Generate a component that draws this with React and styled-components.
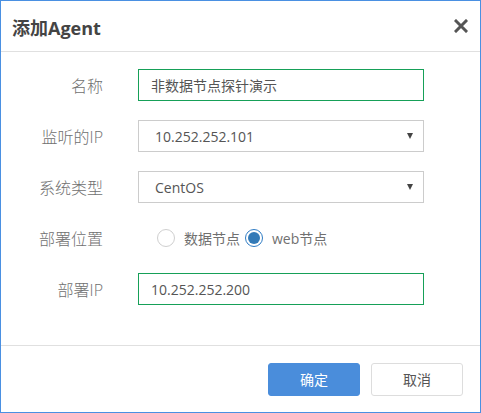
import React, { useState } from "react";
import styled, { createGlobalStyle } from "styled-components";

const Global = createGlobalStyle`
  html, body { margin: 0; padding: 0; background: #fff; }
  body { font-family: "Open Sans", "Noto Sans CJK SC", sans-serif; }
`;

const Dialog = styled.div`
  box-sizing: border-box;
  width: 481px;
  height: 413px;
  border: 1px solid #4a90e2;
  background: #fff;
  display: flex;
  flex-direction: column;
`;

const Header = styled.div`
  height: 50px;
  border-bottom: 1px solid #e0e0e0;
  display: flex;
  align-items: center;
  justify-content: space-between;
  padding: 0 9px 0 11px;
`;

const Title = styled.h3`
  margin: 0;
  padding-top: 2px;
  font-size: 18px;
  font-weight: 700;
  color: #444;
  font-family: "Open Sans", "Noto Sans CJK SC", sans-serif;
`;

const Close = styled.button`
  border: 0;
  background: none;
  padding: 0;
  width: 20px;
  height: 20px;
  display: flex;
  align-items: center;
  justify-content: center;
  cursor: pointer;
`;

const Body = styled.div`
  flex: 1;
  padding: 17px 0 0;
  display: flex;
  flex-direction: column;
  gap: 19px;
  border-bottom: 1px solid #e0e0e0;
`;

const Row = styled.div`
  display: flex;
  align-items: center;
  height: 32px;
`;

const Label = styled.label`
  width: 102px;
  text-align: right;
  font-size: 16px;
  font-weight: 300;
  color: #707070;
  margin-right: 35px;
  font-family: "Open Sans", "Noto Sans CJK SC", sans-serif;
`;

const Field = styled.div`
  box-sizing: border-box;
  width: 286px;
  height: 32px;
  border: 1px solid ${(p) => (p.$active ? "#16a058" : "#cccccc")};
  display: flex;
  align-items: center;
  justify-content: space-between;
  padding: 0 10px 0 ${(p) => (p.$select ? "16px" : "12px")};
  font-size: 14px;
  color: #555;
`;

const Caret = styled.span`
  width: 0;
  height: 0;
  border-left: 3.5px solid transparent;
  border-right: 3.5px solid transparent;
  border-top: 6px solid #444;
`;

const Radios = styled.div`
  display: flex;
  align-items: center;
  padding-left: 19px;
`;

const RadioOpt = styled.span`
  display: flex;
  align-items: center;
  gap: 9px;
  margin-right: 5px;
  font-size: 14px;
  color: #707070;
  cursor: pointer;
`;

const Dot = styled.span`
  box-sizing: border-box;
  width: 18px;
  height: 18px;
  border-radius: 50%;
  border: 1px solid ${(p) => (p.$on ? "#2f7cc4" : "#cfcfcf")};
  display: flex;
  align-items: center;
  justify-content: center;
  &::after {
    content: "";
    width: 12px;
    height: 12px;
    border-radius: 50%;
    background: ${(p) => (p.$on ? "#337ab7" : "transparent")};
  }
`;

const Footer = styled.div`
  height: 66px;
  display: flex;
  align-items: center;
  justify-content: flex-end;
  gap: 11px;
  padding: 0 17px 0 0;
`;

const Button = styled.button`
  box-sizing: border-box;
  width: 92px;
  height: 33px;
  border-radius: 3px;
  font-size: 14px;
  font-family: "Open Sans", "Noto Sans CJK SC", sans-serif;
  border: 1px solid ${(p) => (p.$primary ? "#4a8ddb" : "#dddddd")};
  background: ${(p) => (p.$primary ? "#4a8ddb" : "#fff")};
  color: ${(p) => (p.$primary ? "#fff" : "#555")};
  cursor: pointer;
`;

export default function App() {
  const [place, setPlace] = useState("web");
  return (
    <>
      <Global />
      <Dialog>
        <Header>
          <Title>添加Agent</Title>
          <Close>
            <svg width="14" height="14" viewBox="0 0 14 14">
              <path d="M2 2L12 12M12 2L2 12" stroke="#555" strokeWidth="3" strokeLinecap="square" />
            </svg>
          </Close>
        </Header>
        <Body>
          <Row>
            <Label>名称</Label>
            <Field $active>非数据节点探针演示</Field>
          </Row>
          <Row>
            <Label>监听的IP</Label>
            <Field $select>
              10.252.252.101
              <Caret />
            </Field>
          </Row>
          <Row>
            <Label>系统类型</Label>
            <Field $select>
              CentOS
              <Caret />
            </Field>
          </Row>
          <Row>
            <Label>部署位置</Label>
            <Radios>
              <RadioOpt onClick={() => setPlace("data")}>
                <Dot $on={place === "data"} />
                数据节点
              </RadioOpt>
              <RadioOpt onClick={() => setPlace("web")}>
                <Dot $on={place === "web"} />
                web节点
              </RadioOpt>
            </Radios>
          </Row>
          <Row>
            <Label>部署IP</Label>
            <Field $active>10.252.252.200</Field>
          </Row>
        </Body>
        <Footer>
          <Button $primary>确定</Button>
          <Button>取消</Button>
        </Footer>
      </Dialog>
    </>
  );
}
